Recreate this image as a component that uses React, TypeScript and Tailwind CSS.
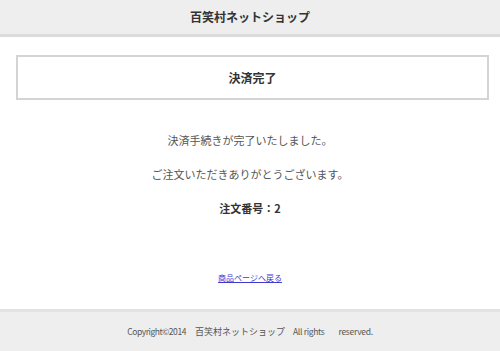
export default function App() {
  const font = { fontFamily: '"Noto Sans CJK JP", "Noto Sans", sans-serif' };
  return (
    <div className="w-[500px] h-[351px] bg-white flex flex-col overflow-hidden" style={font}>
      <header className="h-[37px] shrink-0 bg-[#eeeeee] border-b-[3px] border-[#dcdcdc] flex items-center justify-center">
        <span className="text-[12px] font-bold text-[#333333] leading-none">百笑村ネットショップ</span>
      </header>
      <main className="flex flex-col">
        <div className="mt-[18px] ml-[16px] mr-[11px] h-[45px] border-2 border-[#d4d4d4] flex items-center justify-center">
          <span className="text-[12px] font-bold text-[#333333] leading-none">決済完了</span>
        </div>
        <div className="mt-[23px] flex flex-col">
          <div className="h-[34px] flex items-center justify-center text-[11px] text-[#555555]">決済手続きが完了いたしました。</div>
          <div className="h-[34px] flex items-center justify-center text-[11px] text-[#555555]">ご注文いただきありがとうございます。</div>
          <div className="h-[34px] flex items-center justify-center text-[11px] font-bold text-[#333333]">注文番号：2</div>
        </div>
        <div className="mt-[43px] h-[20px] flex items-center justify-center">
          <a href="#" className="text-[8px] text-[#3b3bd0] underline leading-none">商品ページへ戻る</a>
        </div>
      </main>
      <footer className="mt-[21px] h-[42px] shrink-0 bg-[#eeeeee] border-t-[3px] border-[#e2e2e2] flex items-center justify-center text-[9px] text-[#555555]">
        <span className="text-[8.5px] tracking-[-0.45px]">Copyright©2014</span>
        <span className="ml-[9px]">百笑村ネットショップ</span>
        <span className="ml-[8px] text-[8.5px] tracking-[-0.3px]">All rights</span>
        <span className="ml-[14px] text-[8.5px] tracking-[-0.3px]">reserved.</span>
      </footer>
    </div>
  );
}
